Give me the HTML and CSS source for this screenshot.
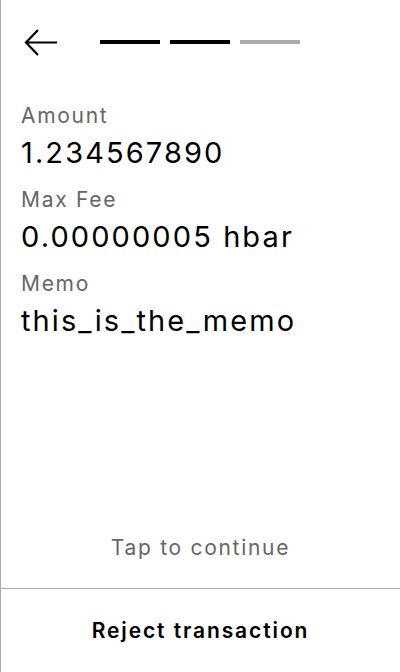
FILE: index.html
```html
<!DOCTYPE html>
<html>
<head>
<meta charset="utf-8">
<link rel="stylesheet" href="styles.css">
</head>
<body>
<div class="screen">
  <div class="header">
    <svg class="back" width="34" height="30" viewBox="0 0 34 30">
      <path d="M33 14.5 H3 M14 2 L2 14.5 L14 27" fill="none" stroke="#000" stroke-width="2.2"/>
    </svg>
    <div class="steps">
      <span class="step done"></span>
      <span class="step done"></span>
      <span class="step"></span>
    </div>
  </div>
  <div class="details">
    <div class="label">Amount</div>
    <div class="value">1.234567890</div>
    <div class="label">Max Fee</div>
    <div class="value">0.00000005 hbar</div>
    <div class="label">Memo</div>
    <div class="value">this_is_the_memo</div>
  </div>
  <div class="spacer"></div>
  <div class="tap">Tap to continue</div>
  <div class="footer">Reject transaction</div>
</div>
</body>
</html>
```
FILE: styles.css
```css
html, body {
  margin: 0;
  padding: 0;
  background: #fff;
}
body {
  font-family: Inter, "Noto Sans", sans-serif;
  color: #000;
}
.screen {
  height: 672px;
  box-sizing: border-box;
  border-left: 1px solid #a9a9a9;
  display: flex;
  flex-direction: column;
}
.header {
  display: flex;
  align-items: center;
  height: 30px;
  padding: 28px 0 0 23px;
}
.back {
  display: block;
}
.steps {
  display: flex;
  gap: 10px;
  margin-left: 42px;
  margin-bottom: 2px;
}
.step {
  display: block;
  width: 60px;
  height: 4px;
  background: #ababab;
}
.step.done {
  background: #000;
}
.details {
  padding: 0 0 0 20px;
  margin-top: 39px;
}
.label {
  font-size: 21px;
  line-height: 37px;
  letter-spacing: 1.7px;
  color: #666;
}
.value {
  font-size: 29px;
  line-height: 37px;
  letter-spacing: 2.1px;
  color: #000;
  margin-bottom: 10px;
}
.spacer {
  flex: 1;
}
.tap {
  text-align: center;
  font-size: 21px;
  line-height: 40px;
  letter-spacing: 1.7px;
  color: #666;
  margin-bottom: 20px;
}
.footer {
  border-top: 1px solid #a9a9a9;
  height: 83px;
  display: flex;
  align-items: center;
  justify-content: center;
  font-size: 21px;
  font-weight: 600;
  letter-spacing: 1.9px;
}
```
